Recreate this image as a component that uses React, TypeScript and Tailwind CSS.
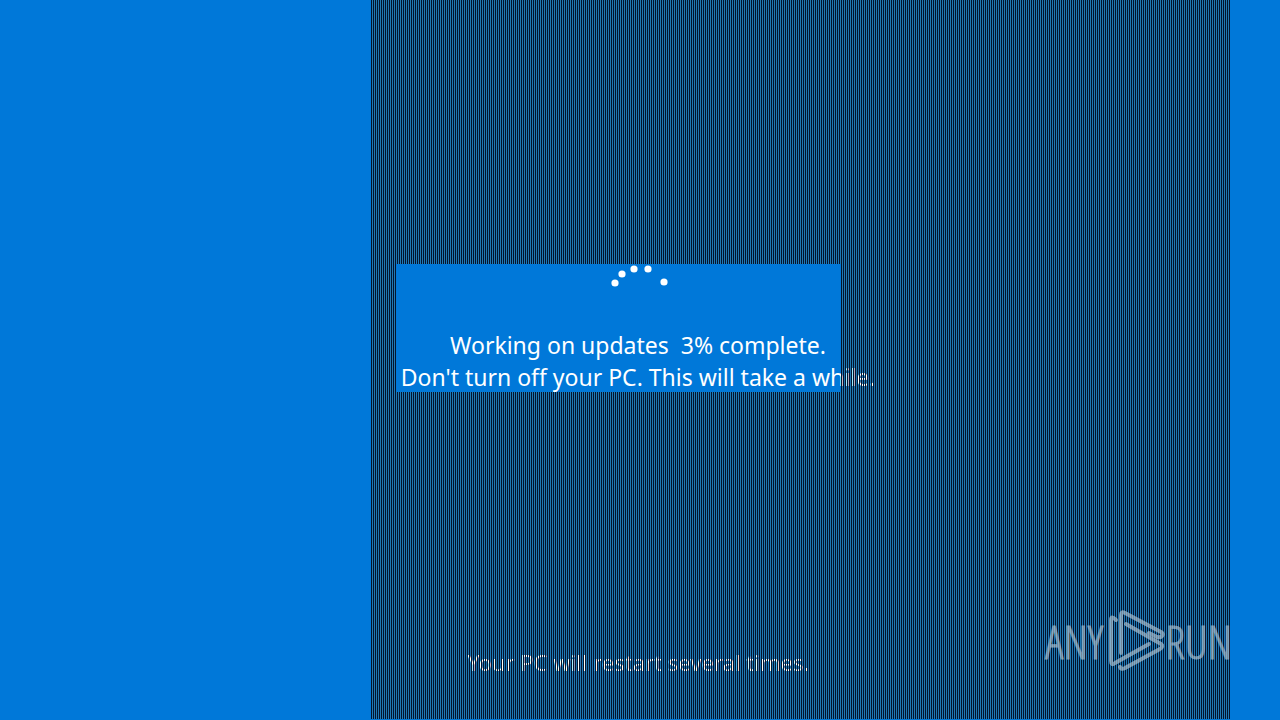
const scanlines =
  "bg-[repeating-linear-gradient(90deg,#03142e_0px,#03142e_1px,transparent_1px,transparent_2px)]";

const dots = [
  { cx: 8, cy: 19 },
  { cx: 15, cy: 10 },
  { cx: 27, cy: 5 },
  { cx: 41, cy: 5 },
  { cx: 57, cy: 18 },
];

function Spinner() {
  return (
    <svg width="62" height="24" viewBox="0 0 62 24" fill="#fff" aria-hidden="true">
      {dots.map((dot) => (
        <circle key={dot.cx} cx={dot.cx} cy={dot.cy} r="3.6" />
      ))}
    </svg>
  );
}

// Dark lines go over the text, except inside the repainted rectangle
function Scanlines() {
  return (
    <div className="absolute inset-0 flex flex-col pb-px">
      <div className={`h-[264px] ${scanlines}`} />
      <div className="flex h-32">
        <div className={`w-[25px] ${scanlines}`} />
        <div className="w-[445px]" />
        <div className={`flex-1 ${scanlines}`} />
      </div>
      <div className={`flex-1 ${scanlines}`} />
    </div>
  );
}

function Logo() {
  return (
    <svg
      width="58"
      height="62"
      viewBox="0 0 58 62"
      fill="none"
      stroke="currentColor"
      strokeWidth="4"
      strokeLinejoin="round"
      strokeLinecap="round"
      aria-hidden="true"
    >
      <path d="M14 43V5Q14 1 18 3L54 22Q57 24 55 26Q53 28 50 27L42 23" />
      <path d="M9 10Q4 5 4 10V51Q4 56 8 53L42 34" />
      <path d="M19 14L54 34Q57 36 53 39L18 58Q14 60 13 57" />
    </svg>
  );
}

function Watermark() {
  return (
    <div className="absolute right-12 bottom-12 flex items-center font-['Open_Sans_Condensed_Light','Open_Sans_Light_Condensed','Roboto_Condensed',sans-serif] text-[46px] leading-none text-[#b4c6d4] opacity-65 [-webkit-text-stroke:1px_currentColor]">
      <span className="mr-1">ANY</span>
      <Logo />
      <span>RUN</span>
    </div>
  );
}

export default function App() {
  return (
    <main className="relative flex h-screen overflow-hidden bg-[#0078d9] font-['Noto_Sans',sans-serif] text-[23px] text-white">
      <div className="w-[29%]" />
      <div className="flex flex-1 flex-col pb-px">
        <div className="h-[264px] bg-[#2079b4]" />
        <div className="flex h-32">
          <div className="w-[25px] bg-[#2079b4]" />
          <div className="w-[445px]" />
          <div className="flex-1 bg-[#2079b4]" />
        </div>
        <div className="flex-1 bg-[#2079b4]" />
      </div>
      <div className="w-[50px]" />
      <section className="absolute inset-y-0 right-1 left-0 flex flex-col items-center pt-[264px]">
        <Spinner />
        <p className="mt-[41px] leading-8 whitespace-pre">Working on updates  3% complete.</p>
        <p className="leading-8">Don't turn off your PC. This will take a while.</p>
        <p className="mt-auto mb-[42px] text-[22px] leading-8">Your PC will restart several times.</p>
      </section>
      <div className="pointer-events-none absolute inset-0 flex">
        <div className="w-[29%]" />
        <div className="relative flex-1">
          <Scanlines />
        </div>
        <div className="w-[50px]" />
      </div>
      <Watermark />
    </main>
  );
}
